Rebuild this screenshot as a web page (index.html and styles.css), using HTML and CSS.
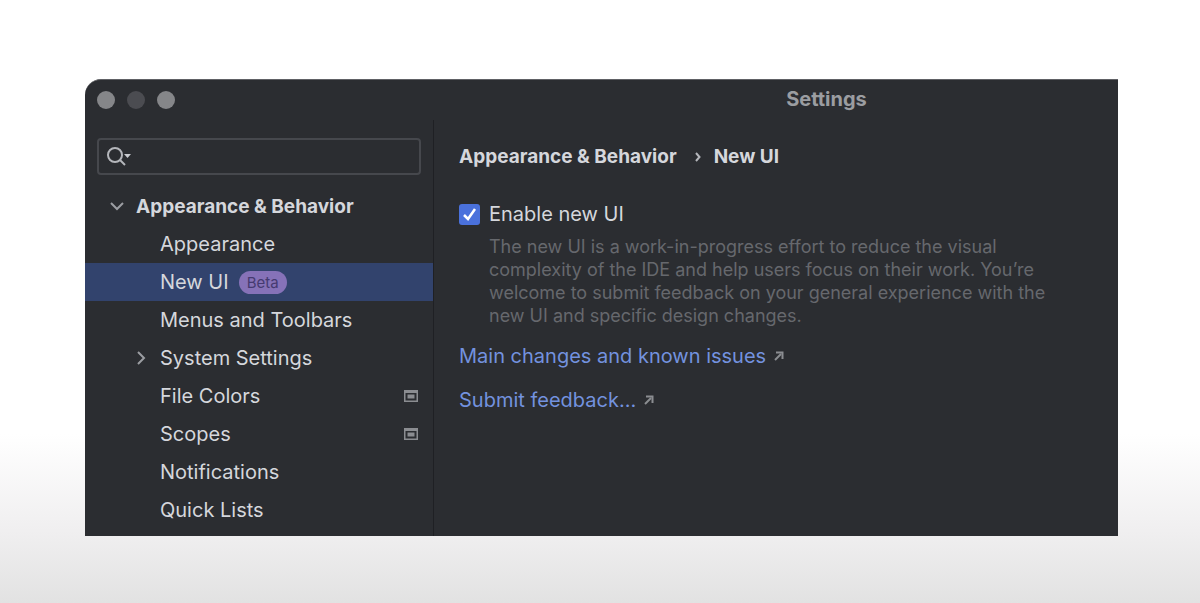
FILE: index.html
```
<!DOCTYPE html>
<html lang="en">
<head>
    <meta charset="UTF-8">
    <meta name="viewport" content="width=device-width, initial-scale=1.0">
    <title>Settings</title>
    <link rel="stylesheet" href="styles.css">
</head>
<body>
    <div class="window">
        <header class="titlebar">
            <div class="lights">
                <span class="light"></span>
                <span class="light dim"></span>
                <span class="light"></span>
            </div>
            <h1>Settings</h1>
        </header>

        <div class="columns">
            <aside class="sidebar">
                <div class="search">
                    <svg width="28" height="22" viewBox="0 0 28 22" fill="none" stroke="#b4b6bb" stroke-width="2" aria-hidden="true">
                        <circle cx="9" cy="9" r="7"/>
                        <path d="M14 14l5 5"/>
                        <path d="M18 8h7l-3.500 4z" fill="#c9cbd0" stroke="none"/>
                    </svg>
                    <input type="text" aria-label="Search settings">
                </div>

                <nav class="tree">
                    <a href="#" class="row group">
                        <svg class="arrow" width="14" height="14" viewBox="0 0 14 14" aria-hidden="true"><path d="M1 4l6 6 6-6"/></svg>
                        Appearance &amp; Behavior
                    </a>
                    <a href="#" class="row">Appearance</a>
                    <a href="#" class="row selected">New UI <span class="badge">Beta</span></a>
                    <a href="#" class="row">Menus and Toolbars</a>
                    <a href="#" class="row parent">
                        <svg class="arrow" width="14" height="14" viewBox="0 0 14 14" aria-hidden="true"><path d="M4 1l6 6-6 6"/></svg>
                        System Settings
                    </a>
                    <a href="#" class="row">File Colors
                        <svg class="project" width="14" height="12" viewBox="0 0 14 12" aria-hidden="true"><path d="M0 0h14v12H0zM1.500 3v7.500h11V3z" fill-rule="evenodd"/><path d="M3.500 4.500h7v4h-7z"/></svg>
                    </a>
                    <a href="#" class="row">Scopes
                        <svg class="project" width="14" height="12" viewBox="0 0 14 12" aria-hidden="true"><path d="M0 0h14v12H0zM1.500 3v7.500h11V3z" fill-rule="evenodd"/><path d="M3.500 4.500h7v4h-7z"/></svg>
                    </a>
                    <a href="#" class="row">Notifications</a>
                    <a href="#" class="row">Quick Lists</a>
                </nav>
            </aside>

            <main class="content">
                <h2 class="breadcrumb">
                    <span>Appearance &amp; Behavior</span>
                    <svg width="6" height="10" viewBox="0 0 6 10" aria-hidden="true"><path d="M1 1l3.500 4L1 9"/></svg>
                    <span>New UI</span>
                </h2>

                <div class="option">
                    <input type="checkbox" id="newUi" checked>
                    <label for="newUi">Enable new UI</label>
                </div>
                <p class="description">
                    The new UI is a work-in-progress effort to reduce the visual<br>
                    complexity of the IDE and help users focus on their work. You’re<br>
                    welcome to submit feedback on your general experience with the<br>
                    new UI and specific design changes.
                </p>

                <a href="#" class="link">Main changes and known issues
                    <svg width="10" height="10" viewBox="0 0 10 10" aria-hidden="true"><path d="M1 9l6-6"/><path d="M2 1.500h6.500V8"/></svg>
                </a>
                <a href="#" class="link">Submit feedback...
                    <svg width="10" height="10" viewBox="0 0 10 10" aria-hidden="true"><path d="M1 9l6-6"/><path d="M2 1.500h6.500V8"/></svg>
                </a>
            </main>
        </div>
    </div>
</body>
</html>
```
FILE: styles.css
```
* {
    box-sizing: border-box;
}

body {
    margin: 0;
    min-height: 100vh;
    padding: 79px 82px 67px 85px;
    background: linear-gradient(#fff 72%, #f0eff0 88%, #e2e2e2);
    font-family: Inter, "Liberation Sans", sans-serif;
    font-size: 20px;
    color: #d5d7dc;
}

h1, h2, p {
    margin: 0;
}

a {
    color: inherit;
    text-decoration: none;
}

.window {
    background-color: #2b2d31;
    border-top: 1px solid #606165;
    border-top-left-radius: 16px;
    overflow: hidden;
}

.titlebar {
    display: flex;
    align-items: center;
    height: 40px;
    padding-left: 12px;
}

.lights {
    display: flex;
    gap: 12px;
    width: 438px;
}

.light {
    width: 18px;
    height: 18px;
    border-radius: 50%;
    background-color: #858689;
}

.light.dim {
    background-color: #4b4c51;
}

.titlebar h1 {
    flex: 1;
    padding-bottom: 2px;
    text-align: center;
    font-size: 20px;
    font-weight: 700;
    line-height: 24px;
    color: #9b9da1;
}

.columns {
    display: flex;
}

.sidebar {
    flex: none;
    width: 349px;
    padding: 18px 0 7px;
    border-right: 1px solid #1f2024;
}

.search {
    display: flex;
    align-items: center;
    height: 37px;
    margin: 0 12px 12px;
    padding-left: 7px;
    border: 2px solid #46484d;
    border-radius: 4px;
}

.search input {
    flex: 1;
    min-width: 0;
    border: none;
    outline: none;
    background: none;
    font: inherit;
    color: inherit;
}

.row {
    display: flex;
    align-items: center;
    height: 38px;
    padding: 0 15px 0 75px;
}

.row.group {
    padding-left: 25px;
    gap: 12px;
    font-size: 19px;
    font-weight: 700;
}

.row.parent {
    padding-left: 49px;
    gap: 12px;
}

.row.selected {
    background-color: #32436d;
}

.arrow {
    fill: none;
    stroke: #9b9da2;
    stroke-width: 2;
}

.badge {
    margin-left: 10px;
    padding: 0 8px;
    border-radius: 12px;
    background-color: #8672b8;
    color: #453a70;
    font-size: 15px;
    line-height: 23px;
}

.project {
    margin-left: auto;
    fill: #8b8d91;
}

.content {
    flex: 1;
    padding: 24px 25px;
}

.breadcrumb {
    display: flex;
    align-items: center;
    font-size: 19px;
    font-weight: 700;
    line-height: 26px;
}

.breadcrumb svg {
    margin: 0 13px 0 18px;
    fill: none;
    stroke: #b4b6bb;
    stroke-width: 2;
}

.option {
    display: flex;
    align-items: center;
    gap: 9px;
    margin-top: 31px;
    line-height: 26px;
}

.option input {
    appearance: none;
    width: 21px;
    height: 21px;
    margin: 0;
    border-radius: 3px;
    background: #4a71dc url("data:image/svg+xml,%3Csvg xmlns='http://www.w3.org/2000/svg' viewBox='0 0 21 21'%3E%3Cpath d='M5 11l4 4 7-10' fill='none' stroke='white' stroke-width='2.500'/%3E%3C/svg%3E");
}

.description {
    margin: 8px 0 16px 30px;
    font-size: 18px;
    line-height: 23px;
    color: #66686d;
}

.link {
    display: flex;
    align-items: center;
    gap: 8px;
    margin-bottom: 18px;
    line-height: 26px;
    color: #7392df;
}

.link svg {
    fill: none;
    stroke: #8b8d91;
    stroke-width: 2;
}
```
